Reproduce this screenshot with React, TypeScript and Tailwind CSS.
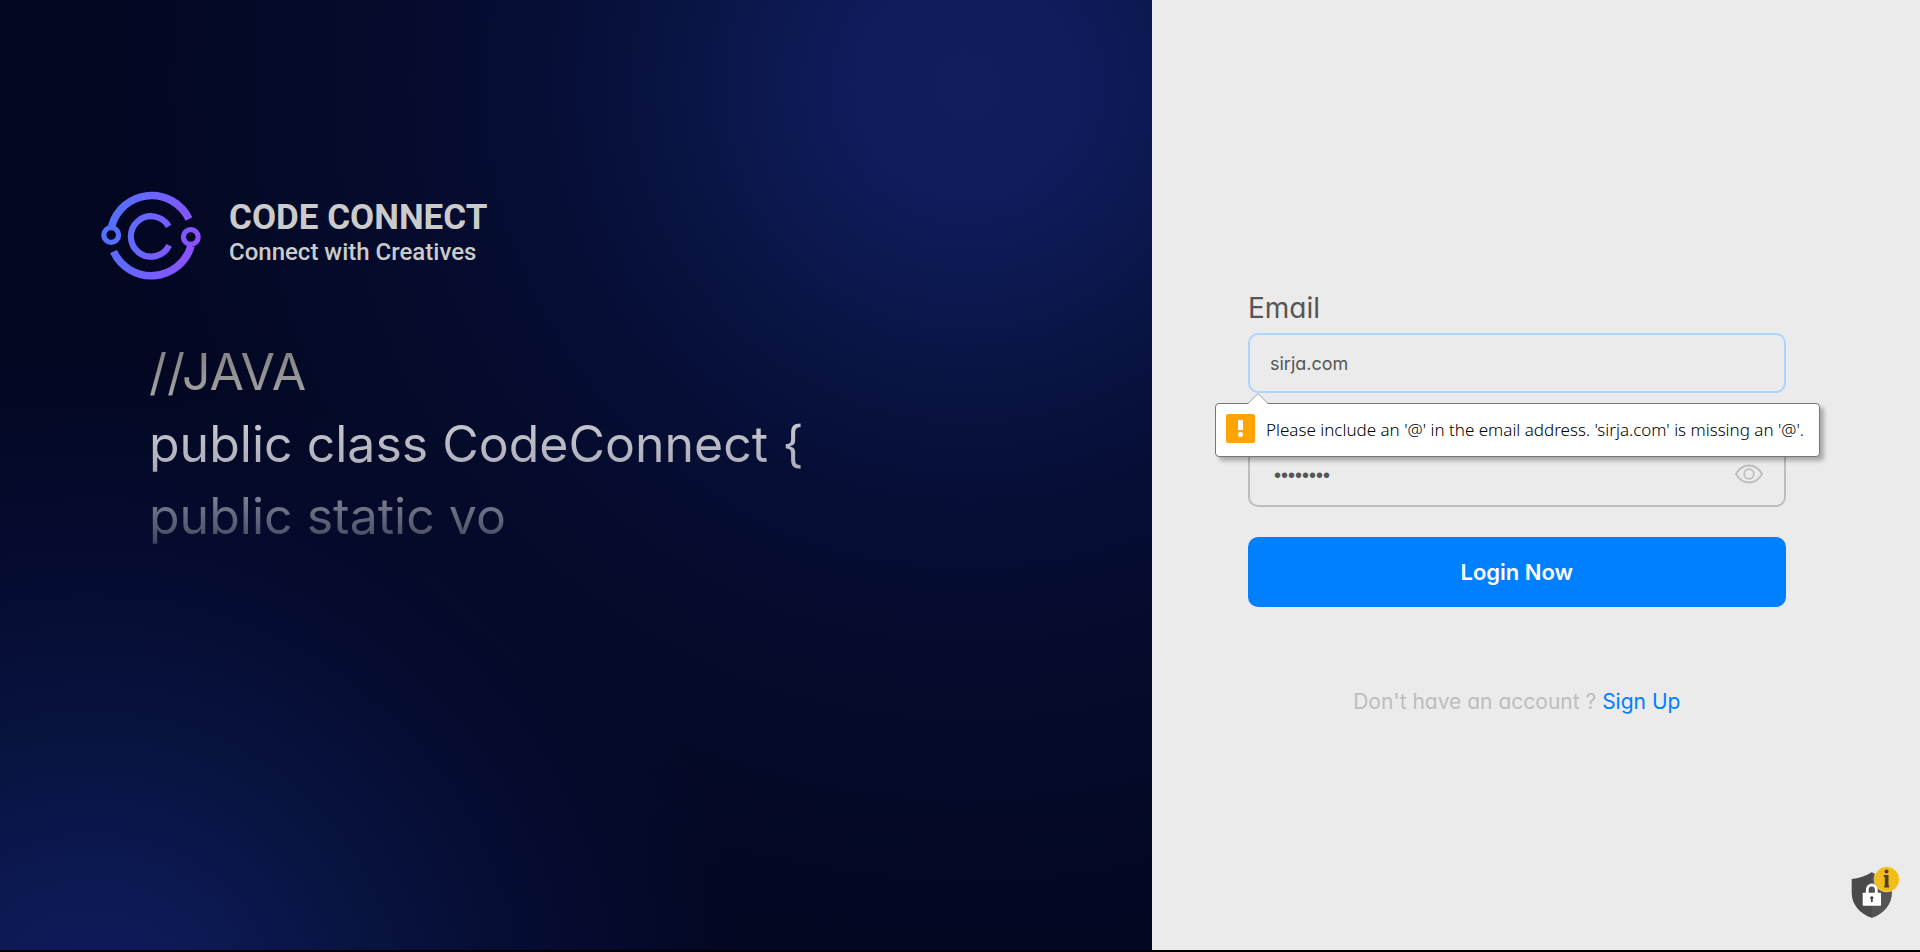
function Logo() {
  return (
    <svg className="h-[92px] w-[101px] shrink-0" viewBox="6 5 101 92" fill="none" role="img" aria-label="Code Connect logo">
      <defs>
        <linearGradient id="brand" gradientUnits="userSpaceOnUse" x1="8" y1="40" x2="106" y2="60">
          <stop offset="0" stopColor="#4f72ff" />
          <stop offset="0.5" stopColor="#6f62ff" />
          <stop offset="1" stopColor="#8f4fff" />
        </linearGradient>
      </defs>
      <g stroke="url(#brand)">
        <path d="M16.600 41.500A41.400 41.400 0 0 1 94 34" strokeWidth="7.600" />
        <path d="M18.600 66.500A41.400 41.400 0 0 0 96 61" strokeWidth="7.600" />
        <circle cx="16.200" cy="50" r="7.400" strokeWidth="5.200" />
        <circle cx="95.800" cy="52" r="7.400" strokeWidth="5.200" />
        <path d="M73.600 41.400A20.200 20.200 0 1 0 74.200 60.400" strokeWidth="6.200" />
      </g>
    </svg>
  );
}

function EyeIcon() {
  return (
    <svg className="h-5 w-7" viewBox="0 0 28 20" fill="none" stroke="#bdbdbd" strokeWidth="1.8" aria-hidden="true">
      <path d="M1 10C4 4.600 8.600 1.500 14 1.500S24 4.600 27 10C24 15.400 19.400 18.500 14 18.500S4 15.400 1 10Z" strokeLinejoin="round" />
      <circle cx="14" cy="10" r="4.800" />
    </svg>
  );
}

function PrivacyIcon() {
  return (
    <svg className="h-[55px] w-[50px]" viewBox="10 5 50 55" aria-hidden="true">
      <path d="M11.700 19C19 18.500 26 16 31.700 12.300C37.500 16 44.500 18.500 51.700 19V33C51.700 45 43 54 31.700 57.800C20.500 54 11.700 45 11.700 33Z" fill="#4a4a4a" />
      <path d="M31.700 12.300C37.500 16 44.500 18.500 51.700 19V33C51.700 45 43 54 31.700 57.800Z" fill="#555" />
      <path d="M27.300 34V29.500a4.500 4.500 0 0 1 9 0V34" fill="none" stroke="#fff" strokeWidth="2.800" />
      <rect x="22.700" y="32.700" width="18.300" height="13" rx="0.600" fill="#fff" />
      <path d="M31.800 36.200a1.700 1.700 0 0 1 .9 3.100V42H30.900V39.300a1.700 1.700 0 0 1 .9-3.100Z" fill="#444" />
      <circle cx="46.700" cy="19.300" r="12.600" fill="#f3bc16" stroke="#f0e2b4" strokeWidth="0.600" />
      <circle cx="46.500" cy="11.400" r="2" fill="#4a4326" />
      <path d="M43.800 15H48.500V25.500H49.200V27.500H44.200V25.500H44.800V17H43.800Z" fill="#4a4326" />
    </svg>
  );
}

function ValidationBubble() {
  return (
    <div
      role="alert"
      className="absolute top-[70px] -left-[33px] z-10 flex h-[54px] w-max min-w-[605px] items-center gap-[11px] rounded border border-[#767676] bg-white px-[10px] shadow-[4px_4px_4px_rgba(0,0,0,0.28)]"
    >
      <svg className="absolute -top-[11px] left-8 h-[11px] w-5" viewBox="0 0 20 11" aria-hidden="true">
        <path d="M0 11L10 0.700L20 11Z" fill="#fff" />
        <path d="M0 10.300L10 0.700L20 10.300" fill="none" stroke="#a0a0a0" />
      </svg>
      <svg className="mb-1 h-[29px] w-[29px] shrink-0" viewBox="0 0 29 29" aria-hidden="true">
        <rect width="29" height="29" rx="2" fill="#ffa400" />
        <path d="M12 6H17V16H12Z" fill="#fff" />
        <circle cx="14.500" cy="20.500" r="2.500" fill="#fff" />
      </svg>
      <span className="font-['Noto_Sans',sans-serif] text-[17px] leading-6 font-light whitespace-nowrap text-black">
        Please include an '@' in the email address. 'sirja.com' is missing an '@'.
      </span>
    </div>
  );
}

const codeLines = ['//JAVA', 'public class CodeConnect {', 'public static vo'];

export default function App() {
  return (
    <div className="flex min-h-screen bg-black pb-[2px] font-[Inter,sans-serif] [font-feature-settings:'cv11']">
      <section className="w-3/5 bg-[#030722] bg-[radial-gradient(circle_at_84%_9%,#111d5f_0,#0f1b5a_130px,#0a1546_270px,#060e36_420px,#050b2b_600px,transparent_860px),radial-gradient(circle_at_8%_108%,#111d60_0,#0d1a56_110px,#081340_290px,#060d33_430px,transparent_660px)] pt-[190px] pl-[101px]">
        <header className="flex gap-[27px]">
          <Logo />
          <div className="pt-2 font-[Roboto,sans-serif] text-[#cbcbcb]">
            <h1 className="text-[35px] leading-10 font-bold">CODE CONNECT</h1>
            <p className="text-2xl leading-7 font-medium">Connect with Creatives</p>
          </div>
        </header>
        <pre className="mt-[54px] ml-12 w-max bg-[linear-gradient(#787878_0,#a0a0a0_56px,#c6c6cd_88px,#aeaebb_130px,#777b8e_165px,#50556c_196px,#343a54_216px)] bg-clip-text font-[Inter,sans-serif] text-[50px] leading-[72px] font-normal text-transparent">
          {codeLines.join('\n')}
        </pre>
      </section>

      <main className="w-2/5 bg-[#ebebeb] pt-[290px]">
        <form className="ml-24 w-[70%] text-[#555]" noValidate onSubmit={(e) => e.preventDefault()}>
          <label htmlFor="email" className="mb-[7px] block text-[28px] leading-9">
            Email
          </label>
          <div className="relative">
            <input
              id="email"
              type="email"
              defaultValue="sirja.com"
              className="block h-[60px] w-full rounded-[10px] border-2 border-[#aad5ff] bg-transparent px-5 text-lg outline-none"
            />
            <ValidationBubble />
          </div>

          <div className="relative mt-[54px]">
            <input
              id="password"
              type="password"
              aria-label="Password"
              defaultValue="password"
              className="block h-[60px] w-full rounded-[10px] border-2 border-[#bdbdbd] bg-transparent pr-14 pb-1 pl-6 font-['Liberation_Sans',sans-serif] text-xl outline-none"
            />
            <button type="button" aria-label="Show password" className="absolute top-[17px] right-[23px]">
              <EyeIcon />
            </button>
          </div>

          <button type="submit" className="mt-[30px] block h-[70px] w-full rounded-[10px] bg-[#007fff] text-[22px] font-semibold text-white">
            Login Now
          </button>

          <p className="mt-20 text-center text-[21px] leading-[30px] text-[#bdbdbd]">
            Don't have an account ?{' '}
            <a href="#signup" className="text-[#007fff]">
              Sign Up
            </a>
          </p>
        </form>
      </main>

      <button type="button" aria-label="Privacy information" className="fixed right-5 bottom-8">
        <PrivacyIcon />
      </button>
    </div>
  );
}
